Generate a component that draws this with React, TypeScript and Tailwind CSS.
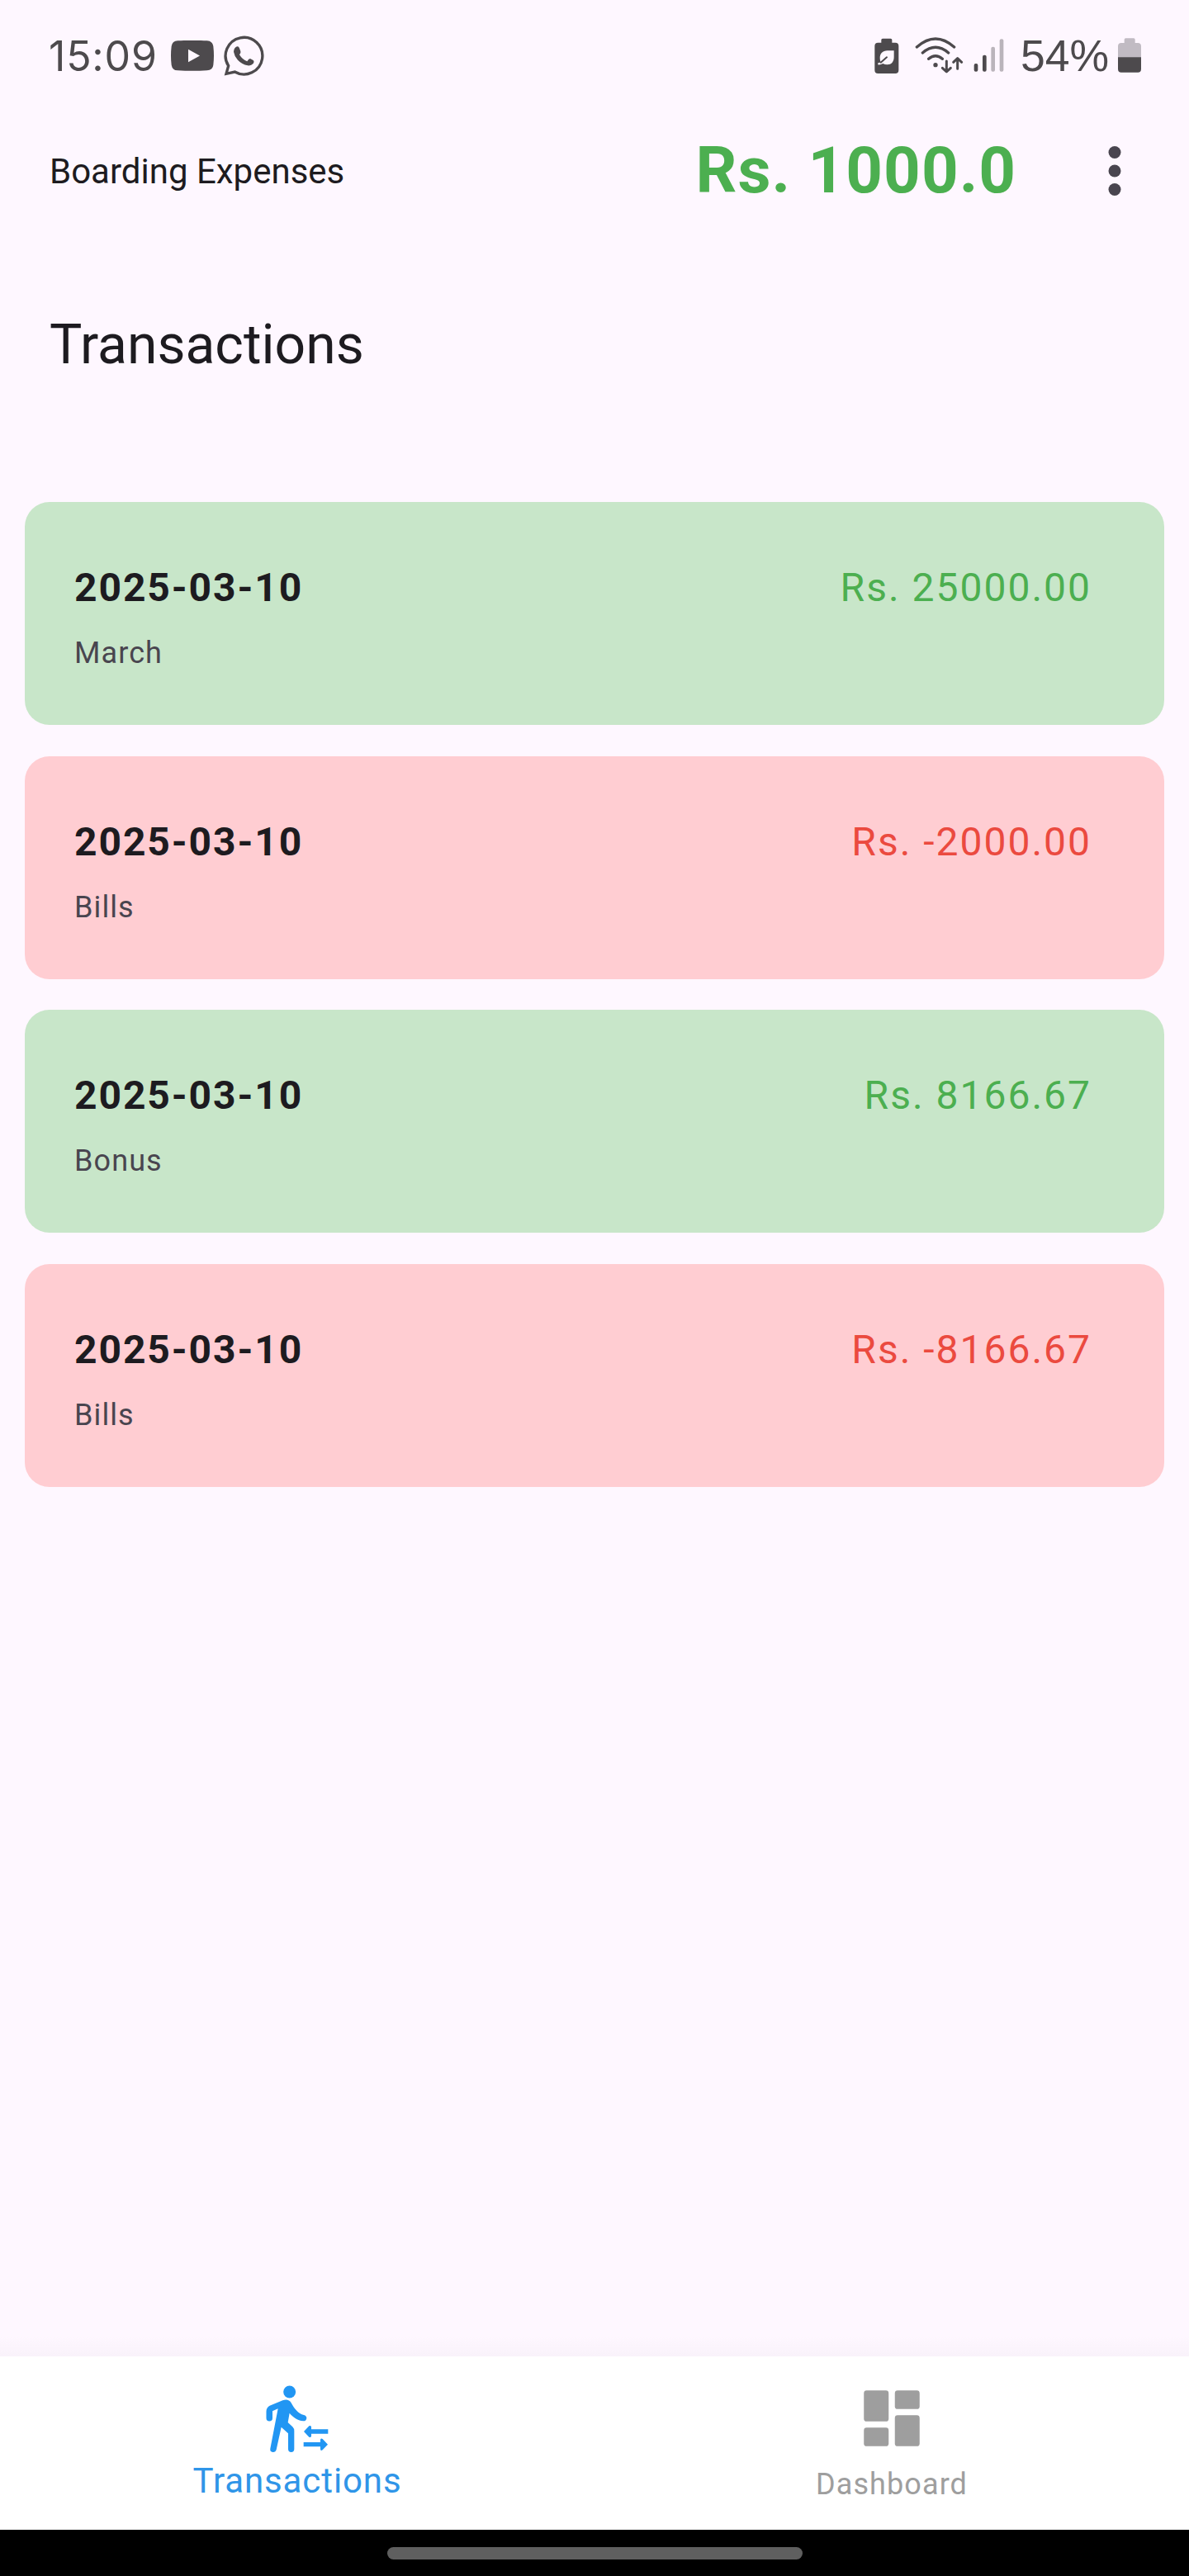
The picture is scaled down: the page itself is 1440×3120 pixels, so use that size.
import React from "react";

type Transaction = { date: string; note: string; amount: string; income: boolean };

const transactions: Transaction[] = [
  { date: "2025-03-10", note: "March", amount: "Rs. 25000.00", income: true },
  { date: "2025-03-10", note: "Bills", amount: "Rs. -2000.00", income: false },
  { date: "2025-03-10", note: "Bonus", amount: "Rs. 8166.67", income: true },
  { date: "2025-03-10", note: "Bills", amount: "Rs. -8166.67", income: false },
];

function YoutubeIcon() {
  return (
    <svg className="h-[37px] w-[52px]" viewBox="501 87 156 111" fill="#4d4a4d">
      <path
        fillRule="evenodd"
        d="M526 88 Q579 85 632 88 Q652 89 655 108 Q659 142 655 176 Q652 195 632 196 Q579 199 526 196 Q506 195 503 176 Q499 142 503 108 Q506 89 526 88Z M564 119V166L606 142.500Z"
      />
    </svg>
  );
}

function WhatsappIcon() {
  return (
    <svg className="h-[49px] w-[49px]" viewBox="696 68 147 147" fill="none">
      <path d="M713 178A67 67 0 1 1 736 200L705 207Z" stroke="#4d4a4d" strokeWidth="10" />
      <path
        fill="#4d4a4d"
        d="M741 109Q748 106 752 112L757 125Q759 131 753 138Q764 156 781 162Q787 152 792 152L803 158Q808 162 803 170Q795 179 783 177Q762 173 747 157Q734 142 732 127Q733 114 741 109Z"
      />
    </svg>
  );
}

function LeafBatteryIcon() {
  return (
    <svg className="mt-[1px] h-[44px] w-[30px]" viewBox="86 77 90 132" fill="#4d4a4d">
      <path d="M111 94V84Q111 79 116 79H145Q150 79 150 84V94H162Q174 94 174 106V194Q174 206 162 206H99Q87 206 87 194V106Q87 94 99 94Z" />
      <path fill="#fef7ff" d="M157 123V147C157 164 147 174 133 174Q124 174 117 170Q108 175 99 174V168Q104 168 109 165Q106 159 106 150C106 134 116 123 133 123Z" />
      <path d="M131 147L109 166" stroke="#4d4a4d" strokeWidth="6" strokeLinecap="round" />
    </svg>
  );
}

function WifiIcon() {
  return (
    <svg className="h-[46px] w-[59px]" viewBox="235 72 177 138" fill="none" stroke="#4d4a4d" strokeWidth="10" strokeLinecap="round" strokeLinejoin="round">
      <path d="M242 111Q310 51 378 111M263 132Q310 92 357 132M285 154Q310 132 335 154" />
      <circle cx="310" cy="176" r="8" fill="#4d4a4d" stroke="none" />
      <path strokeWidth="9" d="M350 162V200M335 187L350 201L365 187M390 190V153M375 166L390 152L405 166" />
    </svg>
  );
}

function SignalIcon() {
  return (
    <svg className="h-[40px] w-[37px]" viewBox="447 81 111 120" fill="#4d4a4d">
      <rect x="449" y="171" width="14" height="29" rx="6" />
      <rect x="480" y="140" width="14" height="60" rx="6" />
      <rect x="511" y="110" width="14" height="90" rx="6" fill="#bab4bb" />
      <rect x="542" y="82" width="14" height="118" rx="6" fill="#bab4bb" />
    </svg>
  );
}

function BatteryIcon() {
  return (
    <svg className="h-[42px] w-[28px]" viewBox="972 78 84 126">
      <path fill="#c1bbc3" d="M995 96V84Q995 79 1000 79H1029Q1034 79 1034 84V96H1044Q1056 96 1056 108V149H972V108Q972 96 984 96Z" />
      <path fill="#4d4a4d" d="M972 148H1056V191Q1056 203 1044 203H984Q972 203 972 191Z" />
    </svg>
  );
}

function StatusBar() {
  return (
    <div className="flex h-[123px] items-center justify-between pt-[11px] pr-[58px] pl-[59px] text-[#4d4a4d]">
      <div className="flex items-center">
        <span className="w-[148px] pt-[2px] font-['Inter',sans-serif] text-[50px] leading-[60px] tracking-[0.8px]">15:09</span>
        <YoutubeIcon />
        <span className="w-[12px]" />
        <WhatsappIcon />
      </div>
      <div className="flex items-center">
        <LeafBatteryIcon />
        <span className="w-[19px]" />
        <WifiIcon />
        <span className="w-[12px]" />
        <SignalIcon />
        <span className="ml-[20px] w-[118px] pt-[2px] font-['Liberation_Sans',sans-serif] text-[53.5px] leading-[60px]">54%</span>
        <BatteryIcon />
      </div>
    </div>
  );
}

function AppBar() {
  return (
    <header className="flex h-[168px] items-center justify-between pr-[45px] pl-[60px]">
      <h1 className="pt-[2px] text-[42px] leading-[60px] text-[#1d1b20]">Boarding Expenses</h1>
      <div className="flex items-center">
        <span className="text-[78px] leading-[100px] font-bold tracking-[1px] text-[#4caf50]">Rs. 1000.0</span>
        <svg className="ml-[74px] h-[90px] w-[90px]" viewBox="0 0 24 24" fill="#49454f">
          <circle cx="12" cy="6" r="2" />
          <circle cx="12" cy="12" r="2" />
          <circle cx="12" cy="18" r="2" />
        </svg>
      </div>
    </header>
  );
}

function TransactionCard({ item }: { item: Transaction }) {
  return (
    <li
      className={`flex h-[270px] items-start justify-between rounded-[30px] pt-[68px] pr-[88px] pl-[60px] ${
        item.income ? "bg-[#c8e6c9]" : "bg-[#ffcdd2]"
      }`}
    >
      <div>
        <p className="text-[48px] leading-[72px] font-bold tracking-[1.9px] text-[#1d1b20]">{item.date}</p>
        <p className="mt-[13px] text-[36px] leading-[60px] tracking-[1.1px] text-[#49454f]">{item.note}</p>
      </div>
      <p className={`text-[48px] leading-[72px] tracking-[2px] ${item.income ? "text-[#4caf50]" : "text-[#eb4a3f]"}`}>
        {item.amount}
      </p>
    </li>
  );
}

function WalkingIcon() {
  return (
    <svg className="h-[90px] w-[90px]" viewBox="195 33 270 270" fill="#2196f3">
      <circle cx="302" cy="81" r="22.500" />
      <path d="M217.500 176V152Q217.500 138 230 131L277 112Q298 105 308 121C319 141 333 161 354 165Q364 168 364 176Q363 187 352 187C330 184 313 172 302 158L296 192L313 208Q319 214 319 223V289A11 11 0 0 1 297 289V232L272 209L254 291Q251 301 241 300Q230 298 232 287L260 142L240 151V176A11 11 0 0 1 217.500 176Z" />
      <path d="M354 225L373 205Q381 201 381 209V217H442V233H381V241Q381 249 373 245Z" />
      <path d="M441 272L422 252Q414 248 414 256V264H353V280H414V288Q414 297 422 292Z" />
    </svg>
  );
}

function DashboardIcon() {
  return (
    <svg className="h-[90px] w-[90px]" viewBox="0 0 24 24" fill="#9e9e9e">
      <rect x="3" y="3" width="8" height="10" rx="0.900" />
      <rect x="13" y="3" width="8" height="6" rx="0.900" />
      <rect x="3" y="15" width="8" height="6" rx="0.900" />
      <rect x="13" y="11" width="8" height="10" rx="0.900" />
    </svg>
  );
}

function BottomNav() {
  return (
    <nav className="grid h-[210px] grid-cols-2 bg-white">
      <a className="flex flex-col items-center pt-[27px] text-[#2f95e8]">
        <WalkingIcon />
        <span className="mt-[4px] text-[42px] leading-[60px] tracking-[0.9px]">Transactions</span>
      </a>
      <a className="flex flex-col items-center pt-[30px] text-[#9e9e9e]">
        <DashboardIcon />
        <span className="mt-[5px] text-[36px] leading-[60px] tracking-[1.1px]">Dashboard</span>
      </a>
    </nav>
  );
}

export default function App() {
  return (
    <div className="flex h-[3120px] w-[1440px] flex-col bg-[#fef7ff] font-['Roboto',sans-serif]">
      <StatusBar />
      <AppBar />
      <main className="flex flex-1 flex-col px-[30px] pt-[82px]">
        <h2 className="px-[30px] text-[66px] leading-[90px] text-[#1d1b20]">Transactions</h2>
        <ul className="mt-[145px] flex flex-col gap-[37.67px]">
          {transactions.map((item, i) => (
            <TransactionCard key={i} item={item} />
          ))}
        </ul>
      </main>
      <div className="h-[24px] bg-linear-to-b from-[#fef7ff] to-[#f9f2fa]" />
      <BottomNav />
      <div className="flex h-[56px] justify-center bg-black pt-[21px]">
        <div className="h-[15px] w-[503px] rounded-full bg-[#5f5f5f]" />
      </div>
    </div>
  );
}
